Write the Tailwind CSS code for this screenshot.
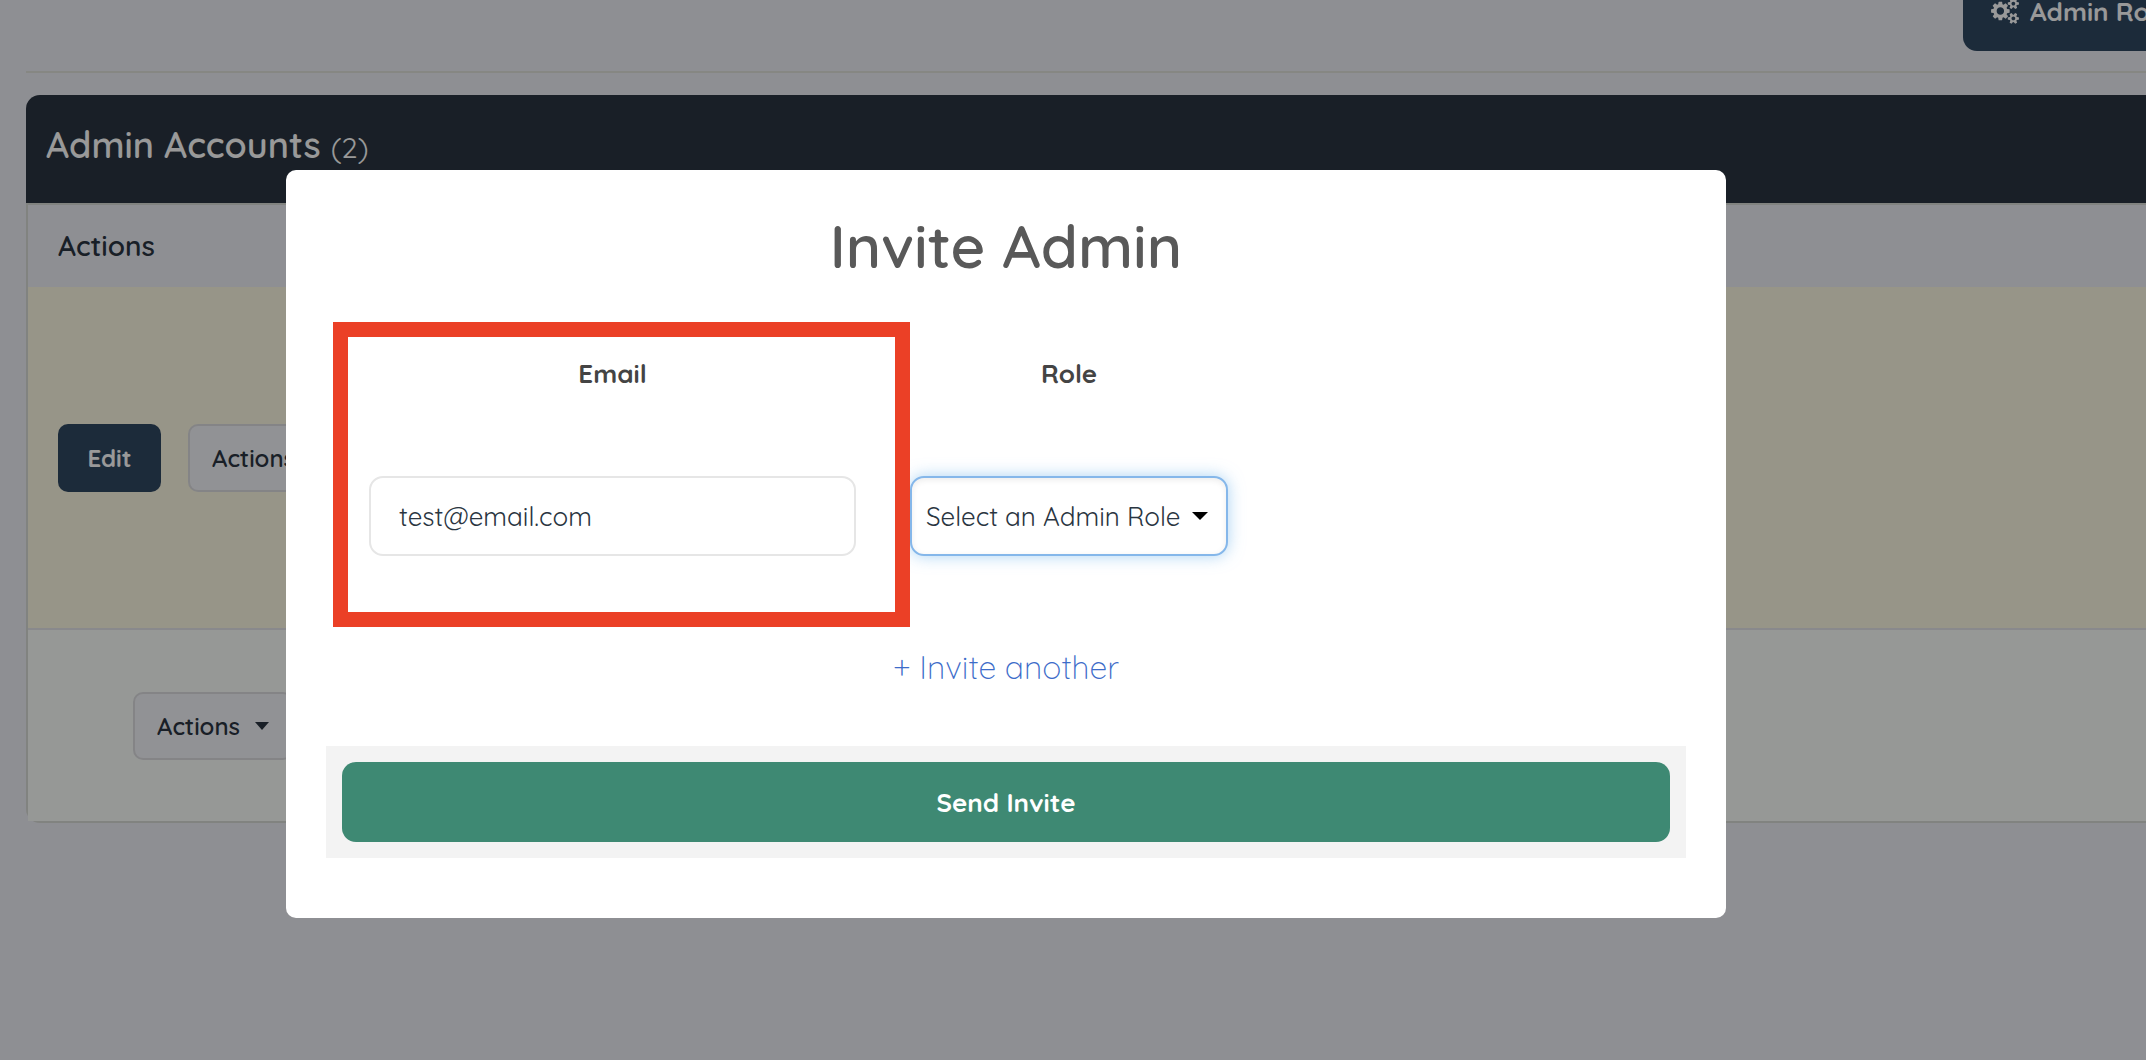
<!DOCTYPE html>
<html lang="en" class="bg-[#edeef5]">

<head>
  <meta charset="UTF-8">
  <meta name="viewport" content="width=device-width, initial-scale=1.0">
  <title>Admin Accounts</title>
  <script src="https://cdn.jsdelivr.net/npm/@tailwindcss/browser@4"></script>
</head>

<body class="bg-[#edeef5] font-['Quicksand','Lato',sans-serif] text-[#2a3541] min-h-screen overflow-hidden">

  <!-- Page -->
  <main class="pl-[26px] overflow-hidden">
    <header class="flex justify-end border-b-2 border-[#dfe1da] pb-5 -mt-[29px]">
      <button type="button" class="flex items-center gap-[11px] h-20 px-7 -mr-[80px] w-[263px] shrink-0 rounded-[14px] bg-[#2f4862] text-white text-[26px] font-bold whitespace-nowrap">
        <svg class="w-7 h-[26px] shrink-0" viewBox="0 0 1920 1792" fill="currentColor" aria-hidden="true">
          <path d="M896 896q0-106-75-181t-181-75-181 75-75 181 75 181 181 75 181-75 75-181zm768 512q0-52-38-90t-90-38-90 38-38 90q0 53 37.5 90.5t90.5 37.5 90.5-37.5 37.5-90.5zm0-1024q0-52-38-90t-90-38-90 38-38 90q0 53 37.5 90.5t90.5 37.5 90.5-37.5 37.5-90.5zm-384 421v185q0 10-7 19.5t-16 10.5l-155 24q-11 35-32 76 34 48 90 115 7 11 7 20 0 12-7 19-23 30-82.5 89.5t-78.5 59.5q-11 0-21-7l-115-90q-37 19-77 31-11 108-23 155-7 24-30 24h-186q-11 0-20-7.500t-10-17.500l-23-153q-34-10-75-31l-118 89q-7 7-20 7-11 0-21-8-144-133-144-160 0-9 7-19 10-14 41-53t47-61q-23-44-35-82l-152-24q-10-1-17-9.500t-7-19.500v-185q0-10 7-19.500t16-10.500l155-24q11-35 32-76-34-48-90-115-7-11-7-20 0-12 7-20 22-30 82-89t79-59q11 0 21 7l115 90q34-18 77-32 11-108 23-154 7-24 30-24h186q11 0 20 7.500t10 17.500l23 153q34 10 75 31l118-89q8-7 20-7 11 0 21 8 144 133 144 160 0 8-7 19-12 16-42 54t-45 60q23 48 34 82l152 23q10 2 17 10.500t7 19.500zm640 533v140q0 16-149 31-12 27-30 52 51 113 51 138 0 4-4 7-122 71-124 71-8 0-46-47t-52-68q-20 2-30 2t-30-2q-14 21-52 68t-46 47q-2 0-124-71-4-3-4-7 0-25 51-138-18-25-30-52-149-15-149-31v-140q0-16 149-31 13-29 30-52-51-113-51-138 0-4 4-7 4-2 35-20t59-34 30-16q8 0 46 46.500t52 67.500q20-2 30-2t30 2q51-71 92-112l6-2q4 0 124 70 4 3 4 7 0 25-51 138 17 23 30 52 149 15 149 31zm0-1024v140q0 16-149 31-12 27-30 52 51 113 51 138 0 4-4 7-122 71-124 71-8 0-46-47t-52-68q-20 2-30 2t-30-2q-14 21-52 68t-46 47q-2 0-124-71-4-3-4-7 0-25 51-138-18-25-30-52-149-15-149-31v-140q0-16 149-31 13-29 30-52-51-113-51-138 0-4 4-7 4-2 35-20t59-34 30-16q8 0 46 46.500t52 67.500q20-2 30-2t30 2q51-71 92-112l6-2q4 0 124 70 4 3 4 7 0 25-51 138 17 23 30 52 149 15 149 31z"/>
        </svg>
        Admin Roles
      </button>
    </header>

    <section class="mt-[22px]">
      <div class="flex items-baseline gap-2.5 h-[108px] pt-[26px] px-5 rounded-tl-[14px] bg-[#2a3541] text-white">
        <h1 class="text-[36px] leading-[48px] font-semibold">Admin Accounts</h1>
        <span class="text-[29px]">(2)</span>
      </div>
      <div class="border-2 border-r-0 border-[#d8dad6] rounded-bl-[14px]">
        <table class="w-full text-left">
          <thead>
            <tr class="h-[82px]">
              <th class="px-[30px] text-[28px] font-semibold">Actions</th>
            </tr>
          </thead>
          <tbody>
            <tr class="bg-[#fcf8e3]">
              <td class="px-[30px] pt-[137px] pb-[136px]">
                <div class="flex gap-[27px]">
                  <button type="button" class="h-[68px] w-[103px] rounded-[10px] bg-[#2f4862] text-white text-[24px] font-bold">Edit</button>
                  <button type="button" class="flex items-center gap-[15px] h-[68px] px-[22px] rounded-[10px] border-2 border-[#dcdde0] bg-[#f2f3f8] text-[24px] font-semibold">
                    Actions
                    <svg class="w-3.5 h-2" viewBox="0 0 14 8" fill="currentColor" aria-hidden="true"><path d="M0 0h14L7 8z"/></svg>
                  </button>
                </div>
              </td>
            </tr>
            <tr class="bg-[#fafdfa] border-t-2 border-[#e4e5e9]">
              <td class="px-[105px] pt-[62px] pb-[61px]">
                <button type="button" class="flex items-center gap-[15px] h-[68px] px-[22px] rounded-[10px] border-2 border-[#dcdde0] bg-[#f2f3f8] text-[24px] font-semibold">
                  Actions
                  <svg class="w-3.5 h-2" viewBox="0 0 14 8" fill="currentColor" aria-hidden="true"><path d="M0 0h14L7 8z"/></svg>
                </button>
              </td>
            </tr>
          </tbody>
        </table>
      </div>
    </section>
  </main>

  <!-- Invite modal -->
  <div class="fixed inset-0 bg-black/40 pt-[170px] pl-[286px] pr-[420px]">
    <div role="dialog" aria-labelledby="inviteTitle" class="bg-white rounded-[10px] px-10 pt-[38px] pb-[60px]">
      <h2 id="inviteTitle" class="text-center text-[60px] leading-[76px] font-semibold text-[#595959]">Invite Admin</h2>

      <form id="inviteForm">
        <div class="relative mt-[38px] ml-[7px] pl-9 pt-[34px] flex gap-[54px] h-[305px]">
          <div class="w-[487px]">
            <label for="email" class="block text-center text-[26px] leading-9 font-bold text-[#444]">Email</label>
            <input type="email" id="email" name="email" value="test@email.com" class="mt-[84px] w-full h-20 px-7 rounded-[14px] border-2 border-[#e6e6e6] text-[26px] outline-none">
          </div>
          <div class="w-[318px]">
            <label for="role" class="block text-center text-[26px] leading-9 font-bold text-[#444]">Role</label>
            <div class="relative mt-[84px]">
              <select id="role" name="role" class="appearance-none w-full h-20 pl-[14px] pr-8 rounded-[14px] border-2 border-[#85b7ea] bg-white text-[26px] outline-none shadow-[inset_0_2px_6px_rgba(0,0,0,0.08),0_0_16px_rgba(102,175,233,0.55)]">
                <option>Select an Admin Role</option>
              </select>
              <svg class="absolute right-5 top-9 w-4 h-2 pointer-events-none" viewBox="0 0 16 8" aria-hidden="true"><path d="M0 0h16L8 8z"/></svg>
            </div>
          </div>
          <!-- Highlight around the email field -->
          <div class="absolute left-0 top-0 w-[577px] h-[305px] border-[15px] border-[#eb4026] pointer-events-none"></div>
        </div>

        <div class="mt-5 text-center">
          <a href="#" class="text-[32px] leading-10 font-light text-[#3d6cc9]">+ Invite another</a>
        </div>

        <div class="mt-[59px] p-4 bg-[#f3f3f3]">
          <button type="submit" class="block w-full h-20 rounded-[14px] bg-[#3e8973] text-white text-[26px] font-bold">Send Invite</button>
        </div>
      </form>
    </div>
  </div>

</body>

</html>
